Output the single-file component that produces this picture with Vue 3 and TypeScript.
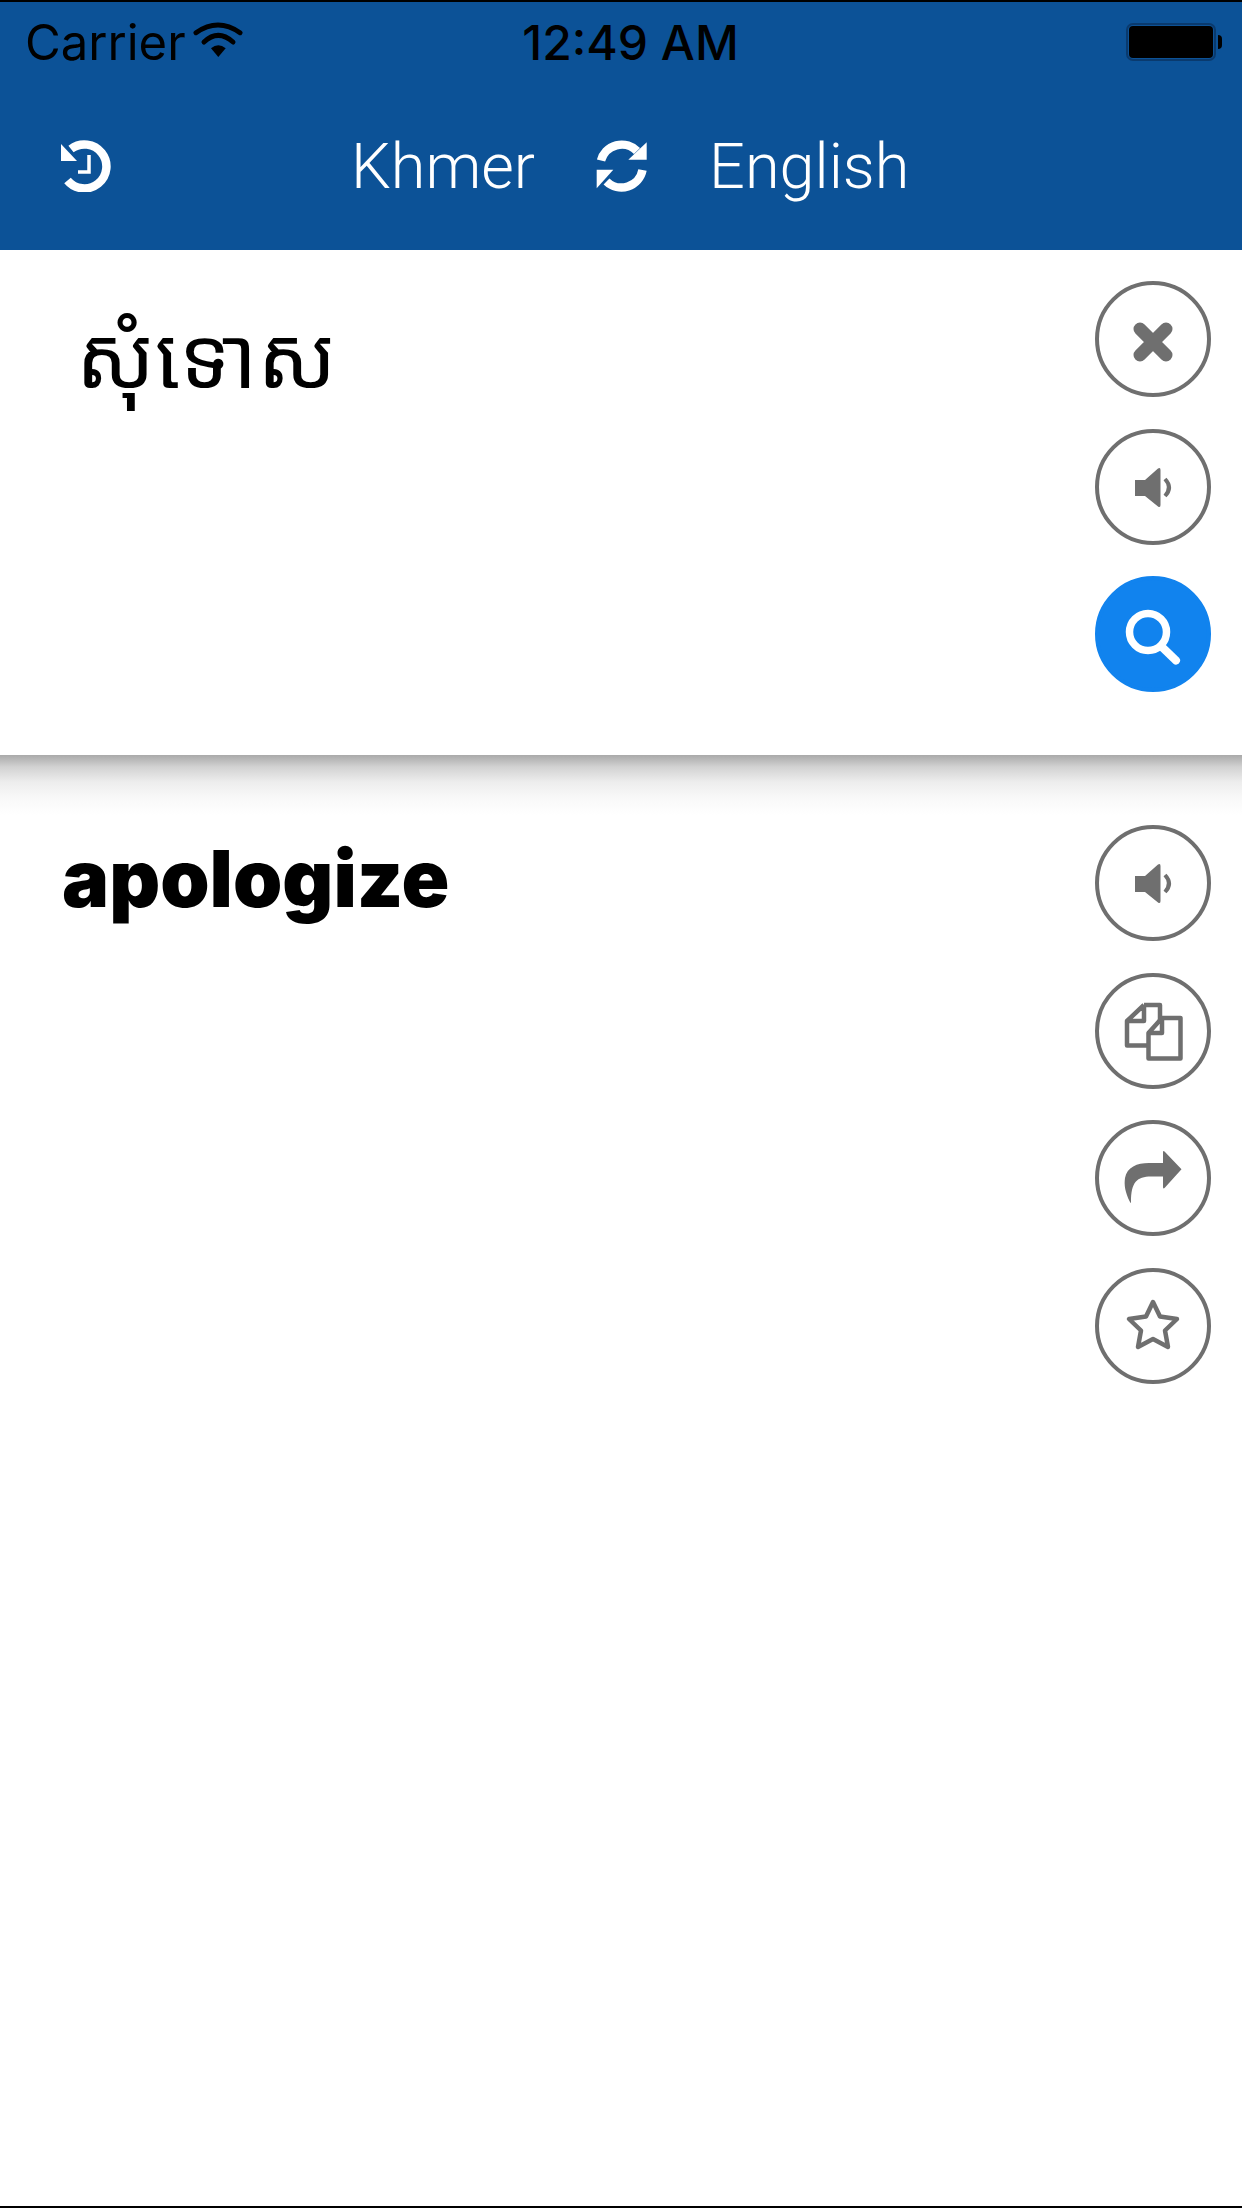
<template>
  <div class="screen">
    <header class="top">
      <div class="status">
        <div class="status__left">
          <span>Carrier</span>
          <svg class="wifi" viewBox="0 0 50 40" width="50" height="40">
            <path d="M3 12.7 Q25 -2.7 47 12.7" />
            <path d="M11 22 Q25 8.7 40 22" />
            <path class="wifi__dot" d="M18 28.3 Q25.3 22 32.7 28.3 L25.3 37 Z" />
          </svg>
        </div>
        <div class="status__time">12:49 AM</div>
        <div class="status__right">
          <span class="battery"><span class="battery__fill" /></span>
          <span class="battery__cap" />
        </div>
      </div>
      <nav class="nav">
        <svg class="nav__history" viewBox="0 0 52 52" width="52" height="52">
          <path class="ring" d="M11 9 A22 22 0 1 1 7.5 40.5" />
          <path class="solid" d="M1 4 L1 21 L17 21 Z" />
          <path class="hand" d="M29 15 V32 H18" />
        </svg>
        <div class="nav__langs">
          <span>Khmer</span>
          <svg viewBox="0 0 52 52" width="52" height="52">
            <path class="ring" d="M5 20.5 A21.5 21.5 0 0 1 41 11" />
            <path class="solid" d="M50.7 2.3 V19.7 H32.3 Z" />
            <path class="ring" d="M46.5 30 A21.5 21.5 0 0 1 10.5 41.5" />
            <path class="solid" d="M0.7 29.7 H17.3 L0.7 48.3 Z" />
          </svg>
          <span>English</span>
        </div>
      </nav>
    </header>

    <section class="panel panel--source">
      <div class="panel__text panel__text--khmer" lang="km">សុំទោស</div>
      <div class="actions">
        <button class="circle">
          <svg viewBox="0 0 116 116"><path class="cross" d="M45 48 L71 74 M71 48 L45 74" /></svg>
        </button>
        <button class="circle">
          <svg viewBox="0 0 116 116">
            <path class="fill" :d="speaker" />
            <path class="line" :d="speakerWave" />
          </svg>
        </button>
        <button class="circle circle--primary">
          <svg viewBox="0 0 116 116">
            <circle class="lens" cx="53" cy="56" r="18.5" />
            <path class="lens lens--handle" d="M67 71 L81 84.5" />
          </svg>
        </button>
      </div>
    </section>

    <div class="fade" />

    <section class="panel panel--result">
      <div class="panel__text panel__text--result">apologize</div>
      <div class="actions">
        <button class="circle">
          <svg viewBox="0 0 116 116">
            <path class="fill" :d="speaker" />
            <path class="line" :d="speakerWave" />
          </svg>
        </button>
        <button class="circle">
          <svg viewBox="0 0 116 116">
            <path class="outline" d="M49 32 H65 V47 M49 32 L32 48 V72.5 H52 M49 32 V48 H32" />
            <path class="outline" d="M67 45 H85.5 V85.5 H53.5 V60 Z M67 45 V60 H53.5" />
          </svg>
        </button>
        <button class="circle">
          <svg viewBox="0 0 116 116">
            <path class="fill" d="M68 32.5 Q68 30 70 32 L86.5 49.3 L70 67.5 Q68 69.5 68 67 V56.5 H56 C42 56.5 36 62 36 82 Q36 84 35 82 C30 72 29 65 30 58 C32 47 42 43 54 43 H68 Z" />
          </svg>
        </button>
        <button class="circle">
          <svg viewBox="0 0 116 116">
            <path class="outline" d="M58 34 L65 48.5 L82 51 L70 62.5 L73 79 L58 71 L43 79 L46 62.5 L34 51 L51 48.5 Z" />
          </svg>
        </button>
      </div>
    </section>
  </div>
</template>

<script setup lang="ts">
const speaker = 'M40 51 H50 L63 39.5 Q65.5 38 65.5 41 V76 Q65.5 79 63 77.5 L50 67 H40 Z'
const speakerWave = 'M70 50 Q78 58.5 70 67'
</script>

<style>
html,
body {
  margin: 0;
  background: #fff;
}
</style>

<style scoped>
.screen {
  width: 1242px;
  height: 2208px;
  box-sizing: border-box;
  border-top: 2px solid #000;
  border-bottom: 2px solid #000;
  display: flex;
  flex-direction: column;
  background: #fff;
  font-family: Inter, 'Noto Sans', sans-serif;
  overflow: hidden;
}

.top {
  height: 248px;
  flex: none;
  background: #0c5297;
}

.status {
  height: 80px;
  padding: 0 20px 0 25px;
  display: flex;
  align-items: center;
  justify-content: space-between;
  font-size: 49px;
  color: #000;
}

.status__left {
  width: 330px;
  display: flex;
  align-items: center;
  gap: 7px;
}

.status__time {
  font-size: 48px;
  font-weight: 500;
  margin-left: 14px;
}

.status__right {
  width: 330px;
  display: flex;
  align-items: center;
  justify-content: flex-end;
}

.wifi {
  margin-top: -4px;
}

.wifi path {
  fill: none;
  stroke: #000;
  stroke-width: 5;
  stroke-linecap: round;
}

.wifi .wifi__dot {
  fill: #000;
  stroke: none;
}

.battery {
  width: 90px;
  height: 38px;
  box-sizing: border-box;
  border: 2px solid #0a3a6e;
  border-radius: 7px;
  padding: 1px;
  display: flex;
}

.battery__fill {
  flex: 1;
  background: #000;
  border-radius: 4px;
}

.battery__cap {
  width: 4px;
  height: 14px;
  margin-left: 2px;
  background: #000;
  border-radius: 0 4px 4px 0;
}

.nav {
  height: 168px;
  padding: 0 0 0 60px;
  box-sizing: border-box;
  display: flex;
  align-items: center;
  color: #fff;
  font-family: Roboto, sans-serif;
  font-size: 63px;
  font-weight: 350;
}

.nav__langs {
  margin-left: 239px;
  display: flex;
  align-items: center;
  gap: 61px;
}

.nav svg path {
  fill: none;
  stroke: #fff;
}

.nav svg .ring {
  stroke-width: 8.5;
}

.nav svg .solid {
  fill: #fff;
  stroke: none;
}

.nav svg .hand {
  stroke-width: 3.5;
}

.panel {
  display: flex;
  justify-content: space-between;
  padding-right: 31px;
  box-sizing: border-box;
  background: #fff;
}

.panel--source {
  height: 505px;
  flex: none;
  padding-top: 31px;
}

.panel--result {
  flex: 1;
  padding-top: 10px;
}

.panel__text {
  color: #000;
}

.panel__text--khmer {
  padding: 24px 0 0 76px;
  font-size: 85px;
  line-height: 100px;
  font-family: 'Noto Sans Khmer', 'Noto Sans', 'DejaVu Sans', sans-serif;
}

.panel__text--result {
  padding: 3px 0 0 62px;
  font-size: 79px;
  line-height: 100px;
  font-weight: 900;
}

.fade {
  height: 60px;
  flex: none;
  background: linear-gradient(to bottom, #a9a9a9 0%, #d2d2d2 20%, #ededed 45%, #f8f8f8 70%, #fff 100%);
}

.actions {
  display: flex;
  flex-direction: column;
  gap: 31.5px;
}

.circle {
  width: 116px;
  height: 116px;
  padding: 0;
  box-sizing: border-box;
  border: 4px solid #6f6f6f;
  border-radius: 50%;
  background: #fff;
  position: relative;
  display: block;
}

.circle svg {
  position: absolute;
  left: -4px;
  top: -4px;
  width: 116px;
  height: 116px;
}

.circle--primary {
  background: #1183ee;
  border-color: #1183ee;
}

.fill {
  fill: #6f6f6f;
}

.line,
.outline,
.cross,
.lens {
  fill: none;
}

.line {
  stroke: #6f6f6f;
  stroke-width: 4;
}

.outline {
  stroke: #6f6f6f;
  stroke-width: 4.5;
  stroke-linejoin: round;
}

.cross {
  stroke: #6f6f6f;
  stroke-width: 13;
  stroke-linecap: round;
}

.lens {
  stroke: #fff;
  stroke-width: 7.5;
}

.lens--handle {
  stroke-linecap: round;
  stroke-width: 8;
}
</style>
